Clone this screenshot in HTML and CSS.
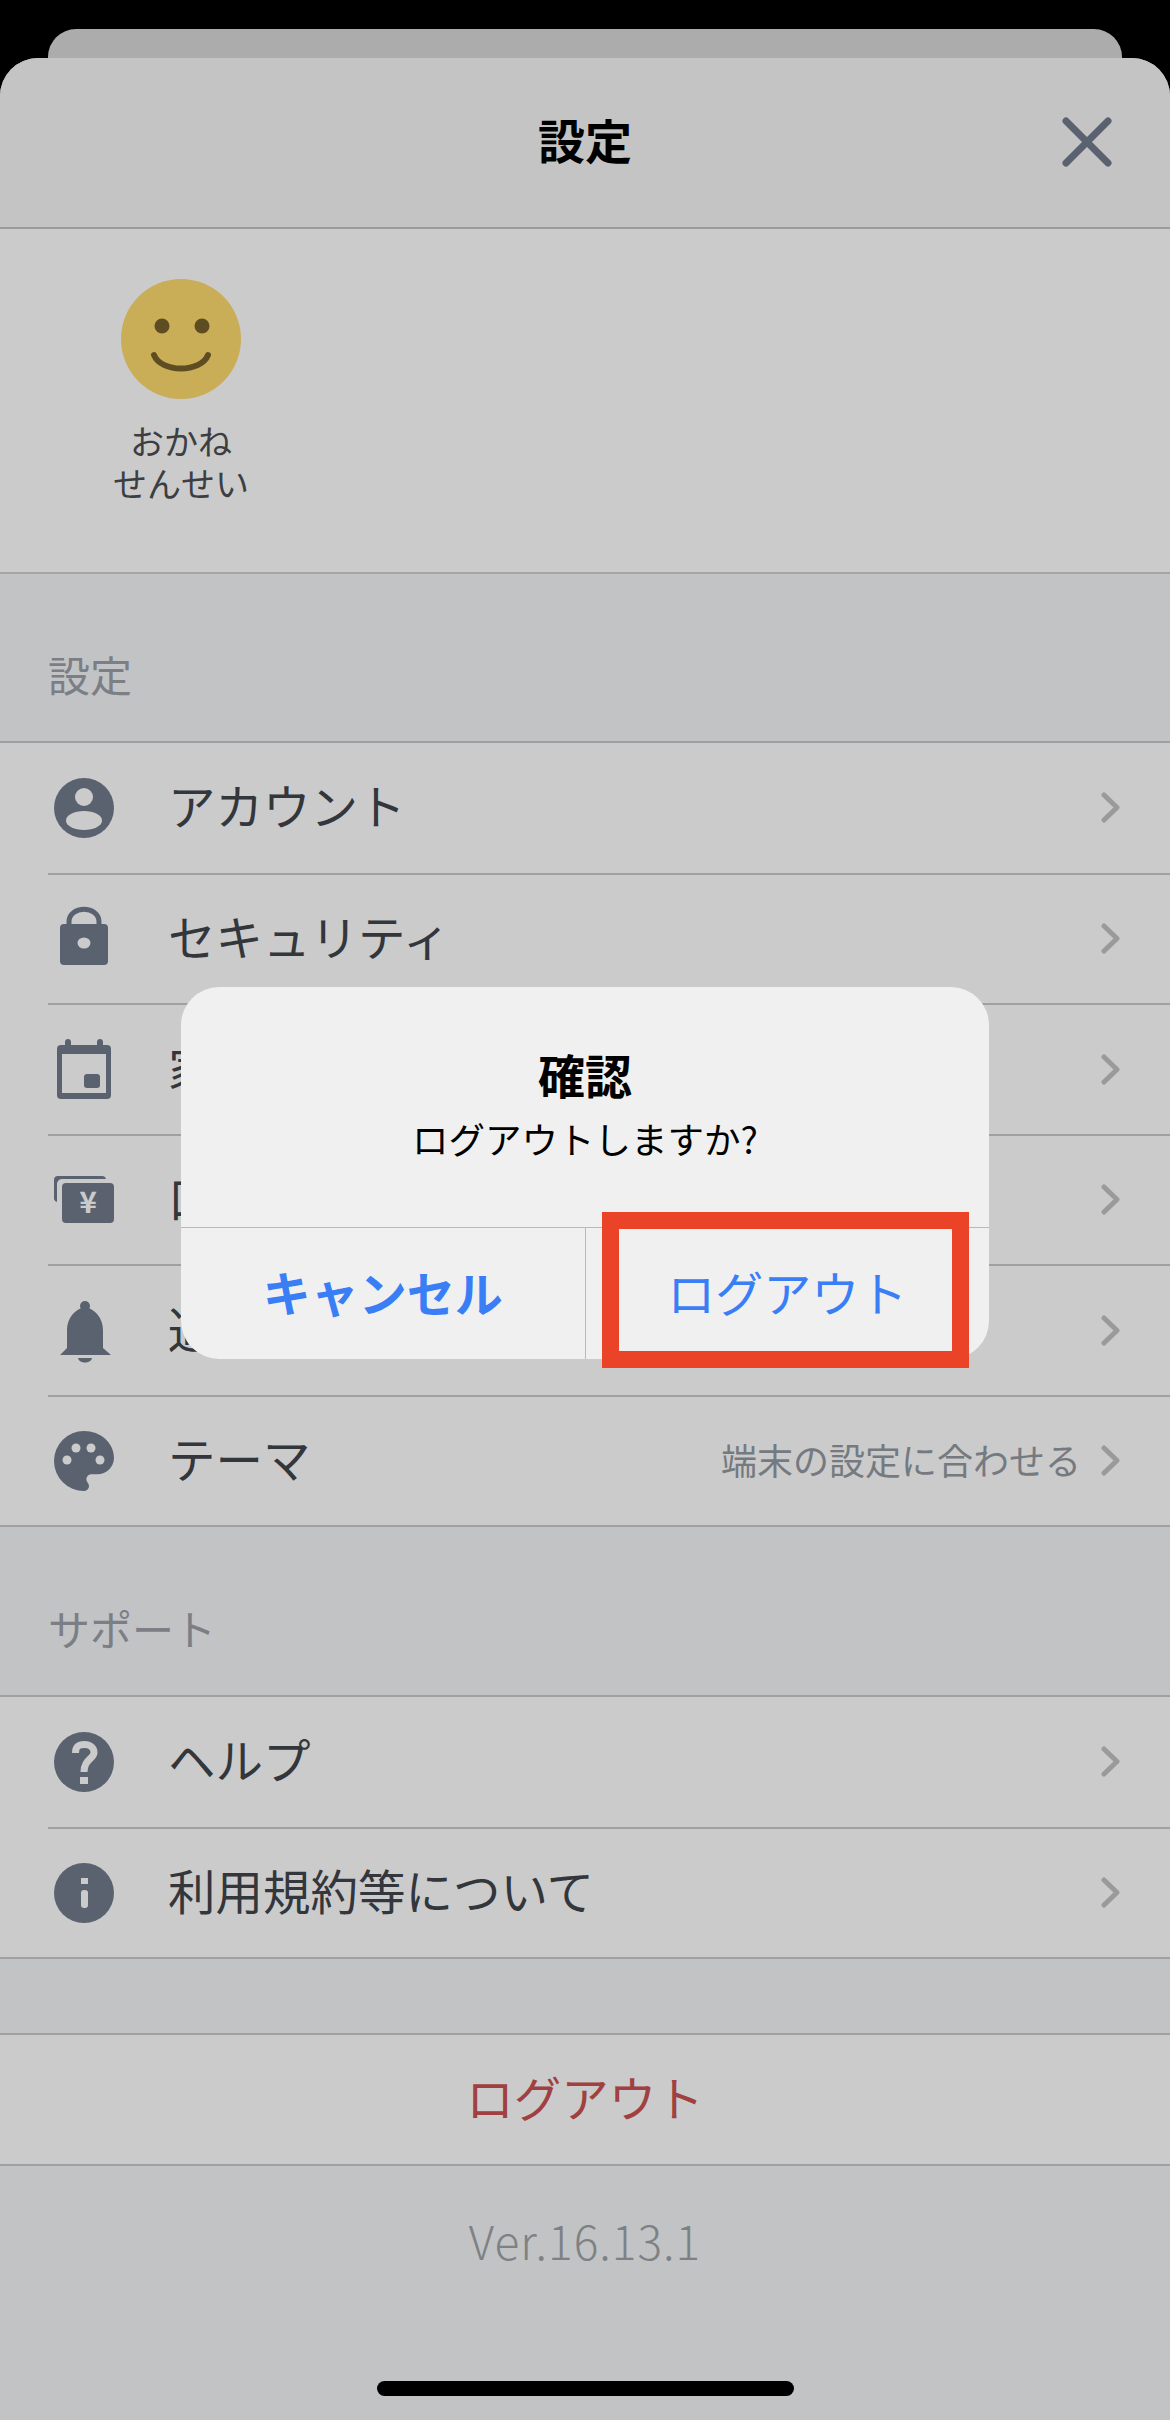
FILE: index.html

```html
<!DOCTYPE html>
<html lang="ja">
<head>
  <meta charset="UTF-8">
  <title>設定</title>
  <link rel="stylesheet" href="styles.css">
</head>
<body>
  <div class="screen">
    <div class="back-sheet"></div>

    <div class="sheet">
      <header class="sheet-header">
        <h1>設定</h1>
        <svg class="close" width="50" height="50" viewBox="0 0 50 50"><path d="M4 4L46 46M46 4L4 46"/></svg>
      </header>

      <section class="profile">
        <div class="child">
          <svg width="120" height="120" viewBox="0 0 120 120">
            <circle cx="60" cy="60" r="60" fill="#c9ad57"/>
            <circle cx="41" cy="47" r="7.5" fill="#5e4d22"/>
            <circle cx="81" cy="47" r="7.5" fill="#5e4d22"/>
            <path d="M33 76C40 94 80 94 87 76" fill="none" stroke="#5e4d22" stroke-width="6" stroke-linecap="round"/>
          </svg>
          <div class="child-name">おかね<br>せんせい</div>
        </div>
      </section>

      <div class="section-title">設定</div>
      <div class="group">
        <div class="row">
          <svg class="icon" viewBox="0 0 72 72">
            <circle cx="36" cy="36" r="30"/>
            <circle class="hole" cx="36" cy="25" r="9"/>
            <ellipse class="hole" cx="36" cy="48.5" rx="18" ry="9.5"/>
          </svg>
          <span class="label">アカウント</span>
          <svg class="chevron" viewBox="0 0 19 31"><path d="M3 3L16 15.5L3 28"/></svg>
        </div>
        <div class="row">
          <svg class="icon" viewBox="0 0 72 72">
            <path d="M21 26V19C21 2 51 2 51 19V26" fill="none" stroke="#5a6270" stroke-width="5"/>
            <rect x="12" y="21" width="48" height="41" rx="4"/>
            <ellipse class="hole" cx="36" cy="40" rx="6.5" ry="5.5"/>
          </svg>
          <span class="label">セキュリティ</span>
          <svg class="chevron" viewBox="0 0 19 31"><path d="M3 3L16 15.5L3 28"/></svg>
        </div>
        <div class="row">
          <svg class="icon" viewBox="0 0 72 72">
            <rect x="9" y="12" width="54" height="54" rx="4"/>
            <rect x="17" y="6" width="6" height="12" rx="3"/>
            <rect x="49" y="6" width="6" height="12" rx="3"/>
            <rect class="hole" x="14" y="21" width="44" height="39"/>
            <rect x="36" y="41" width="16" height="14" rx="3"/>
          </svg>
          <span class="label">家族設定</span>
          <svg class="chevron" viewBox="0 0 19 31"><path d="M3 3L16 15.5L3 28"/></svg>
        </div>
        <div class="row">
          <svg class="icon" viewBox="0 0 72 72">
            <path d="M6 16a4 4 0 0 1 4-4H54a4 4 0 0 1 4 3H14a5 5 0 0 0-5 5V38a4 4 0 0 1-3-3z"/>
            <rect x="14" y="19" width="52" height="40" rx="4"/>
            <text class="yen" x="40" y="49">¥</text>
          </svg>
          <span class="label">口座設定</span>
          <svg class="chevron" viewBox="0 0 19 31"><path d="M3 3L16 15.5L3 28"/></svg>
        </div>
        <div class="row">
          <svg class="icon" viewBox="0 0 72 72">
            <circle cx="37" cy="12" r="5"/>
            <path d="M12 61L19 54V36C19 24 27 15 37 13C47 15 55 24 55 36V54L63 61Z"/>
            <path d="M30 64H44C43 70 31 70 30 64Z"/>
          </svg>
          <span class="label">通知設定</span>
          <svg class="chevron" viewBox="0 0 19 31"><path d="M3 3L16 15.5L3 28"/></svg>
        </div>
        <div class="row">
          <svg class="icon" viewBox="0 0 72 72">
            <path transform="translate(-4 -4) scale(3.333)" d="M12 3a9 9 0 0 0 0 18c.83 0 1.5-.67 1.5-1.5 0-.39-.15-.74-.39-1.01-.23-.26-.38-.61-.38-.99 0-.83.67-1.5 1.5-1.5H16c2.76 0 5-2.24 5-5 0-4.42-4.03-8-9-8z"/>
            <circle class="hole" cx="19" cy="35" r="4.5"/>
            <circle class="hole" cx="28" cy="23" r="4.5"/>
            <circle class="hole" cx="43" cy="23" r="4.5"/>
            <circle class="hole" cx="52" cy="35" r="4.5"/>
          </svg>
          <span class="label">テーマ</span>
          <span class="value">端末の設定に合わせる</span>
          <svg class="chevron" viewBox="0 0 19 31"><path d="M3 3L16 15.5L3 28"/></svg>
        </div>
      </div>

      <div class="section-title tall">サポート</div>
      <div class="group">
        <div class="row">
          <svg class="icon" viewBox="0 0 72 72">
            <circle cx="36" cy="36" r="30"/>
            <path class="hole-line" d="M27.5 27C27.5 20 31 18.500 36.500 18.500C42 18.500 46 21.500 46 26.500C46 33 36 33 36 46"/>
            <rect class="hole" x="32" y="51" width="8" height="7"/>
          </svg>
          <span class="label">ヘルプ</span>
          <svg class="chevron" viewBox="0 0 19 31"><path d="M3 3L16 15.5L3 28"/></svg>
        </div>
        <div class="row">
          <svg class="icon" viewBox="0 0 72 72">
            <circle cx="36" cy="36" r="30"/>
            <rect class="hole" x="33" y="21" width="7" height="6"/>
            <rect class="hole" x="33" y="33" width="7" height="18" rx="3"/>
          </svg>
          <span class="label">利用規約等について</span>
          <svg class="chevron" viewBox="0 0 19 31"><path d="M3 3L16 15.5L3 28"/></svg>
        </div>
      </div>

      <div class="logout">ログアウト</div>
      <div class="version">Ver.16.13.1</div>
      <div class="home-bar"></div>
    </div>

    <div class="dialog">
      <div class="dialog-text">
        <h2>確認</h2>
        <p>ログアウトしますか?</p>
      </div>
      <div class="dialog-buttons">
        <div class="dialog-btn bold">キャンセル</div>
        <div class="dialog-btn">ログアウト</div>
      </div>
    </div>

    <div class="highlight"></div>
  </div>
</body>
</html>
```

FILE: styles.css

```css
* {
  box-sizing: border-box;
}

body {
  margin: 0;
  background: #000;
  font-family: "Noto Sans CJK JP", "Noto Sans", sans-serif;
}

.screen {
  position: relative;
  width: 1170px;
  height: 2420px;
  padding-top: 29px;
  overflow: hidden;
}

.back-sheet {
  height: 40px;
  margin: 0 48px -11px;
  background: #acacac;
  border-radius: 28px 28px 0 0;
}

.sheet {
  position: relative;
  height: 2362px;
  background: #c2c3c5;
  border-radius: 38px 38px 0 0;
  overflow: hidden;
}

.sheet-header {
  display: flex;
  align-items: center;
  justify-content: center;
  position: relative;
  height: 171px;
  padding-bottom: 8px;
  background: #c4c4c4;
  border-bottom: 2px solid #9b9b9b;
}

.sheet-header h1 {
  margin: 0;
  font-size: 47px;
  font-weight: 700;
  color: #000;
}

.close {
  position: absolute;
  right: 58px;
  top: 59px;
  fill: none;
  stroke: #5a6270;
  stroke-width: 7;
  stroke-linecap: round;
}

.profile {
  height: 345px;
  padding: 50px 0 0 101px;
  background: #cbcbcb;
  border-bottom: 2px solid #a5a5a5;
}

.child {
  display: flex;
  flex-direction: column;
  align-items: center;
  width: 160px;
}

.child-name {
  margin-top: 21px;
  font-size: 34px;
  line-height: 42px;
  text-align: center;
  color: #3c3e42;
}

.section-title {
  display: flex;
  align-items: center;
  height: 167px;
  padding: 32px 0 0 48px;
  font-size: 42px;
  color: #7b7f85;
}

.section-title.tall {
  height: 168px;
}

.group {
  background: #cbcbcb;
  border-top: 2px solid #a0a0a0;
  border-bottom: 2px solid #a0a0a0;
}

.row {
  display: flex;
  align-items: center;
  height: 130.5px;
  margin-left: 48px;
  padding-right: 50px;
  border-top: 2px solid #a0a0a0;
}

.row:first-child {
  border-top: none;
  height: 129.5px;
}

.icon {
  flex: none;
  width: 72px;
  height: 72px;
  fill: #5a6270;
}

.icon .hole {
  fill: #cbcbcb;
}

.icon .hole-line {
  fill: none;
  stroke: #cbcbcb;
  stroke-width: 7;
}

.icon .yen {
  fill: #cbcbcb;
  font-size: 30px;
  font-weight: 700;
  text-anchor: middle;
}

.label {
  flex: 1;
  margin-left: 48px;
  padding-bottom: 6px;
  font-size: 47.5px;
  color: #33363b;
}

.value {
  margin-right: 20px;
  padding-bottom: 4px;
  font-size: 36px;
  color: #757a80;
}

.chevron {
  flex: none;
  width: 19px;
  height: 31px;
  fill: none;
  stroke: #9a9a9a;
  stroke-width: 5;
  stroke-linecap: round;
  stroke-linejoin: round;
}

.logout {
  display: flex;
  align-items: center;
  justify-content: center;
  height: 133px;
  margin-top: 74px;
  padding-bottom: 6px;
  background: #cbcbcb;
  border-top: 2px solid #a0a0a0;
  border-bottom: 2px solid #a0a0a0;
  font-size: 47.5px;
  color: #a04040;
}

.version {
  margin-top: 44px;
  font-size: 46px;
  font-weight: 300;
  letter-spacing: 1px;
  line-height: 60px;
  text-align: center;
  color: #7e8184;
}

.home-bar {
  position: absolute;
  left: 377px;
  bottom: 24px;
  width: 417px;
  height: 15px;
  background: #000;
  border-radius: 8px;
}

.dialog {
  position: absolute;
  left: 181px;
  top: 987px;
  display: flex;
  flex-direction: column;
  width: 808px;
  height: 372px;
  background: #f0f0f1;
  border-radius: 38px;
  overflow: hidden;
}

.dialog-text {
  height: 240px;
  padding-top: 55px;
  text-align: center;
  color: #000;
}

.dialog-text h2 {
  margin: 0;
  font-size: 47px;
  font-weight: 700;
  line-height: 64px;
}

.dialog-text p {
  margin: 2px 0 0;
  font-size: 36.5px;
  line-height: 62px;
}

.dialog-buttons {
  display: flex;
  flex: 1;
  padding-bottom: 0;
  border-top: 1px solid #b9b9ba;
}

.dialog-btn {
  display: flex;
  flex: 1;
  align-items: center;
  justify-content: center;
  padding-bottom: 6px;
  font-size: 48px;
  color: #3a7ef5;
}

.dialog-btn.bold {
  font-weight: 700;
  border-right: 1px solid #b9b9ba;
}

.highlight {
  position: absolute;
  left: 602px;
  top: 1212px;
  width: 367px;
  height: 156px;
  border: 17px solid #ea4327;
}
```
